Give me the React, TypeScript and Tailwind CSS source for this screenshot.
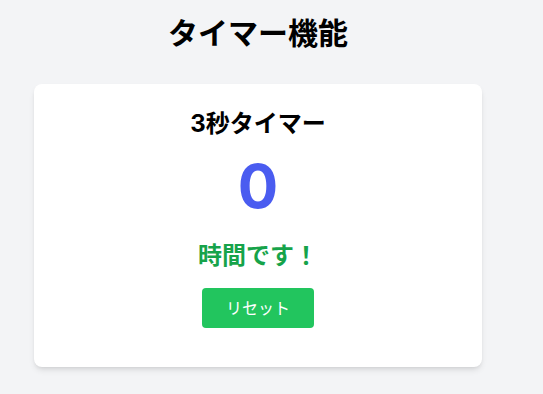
export default function App() {
  return (
    <div
      className="min-h-screen bg-[#f3f4f6] px-[34px] pt-[15px]"
      style={{ fontFamily: 'Inter, "Noto Sans CJK JP", sans-serif' }}
    >
      <div className="w-[448px]">
        <h1 className="mb-[33px] text-center text-3xl font-bold text-black">タイマー機能</h1>
        <div className="flex flex-col items-center rounded-lg bg-white px-6 pt-6 pb-[39px] shadow-md">
          <h2 className="mb-4 text-2xl font-bold text-black">3秒タイマー</h2>
          <div className="mb-6 text-6xl leading-none font-bold text-[#4a5cf0]">0</div>
          <p className="mb-4 text-2xl font-bold text-[#16a34a]">時間です！</p>
          <button className="rounded bg-[#22c55e] px-6 py-2 text-base text-white">リセット</button>
        </div>
      </div>
    </div>
  );
}
